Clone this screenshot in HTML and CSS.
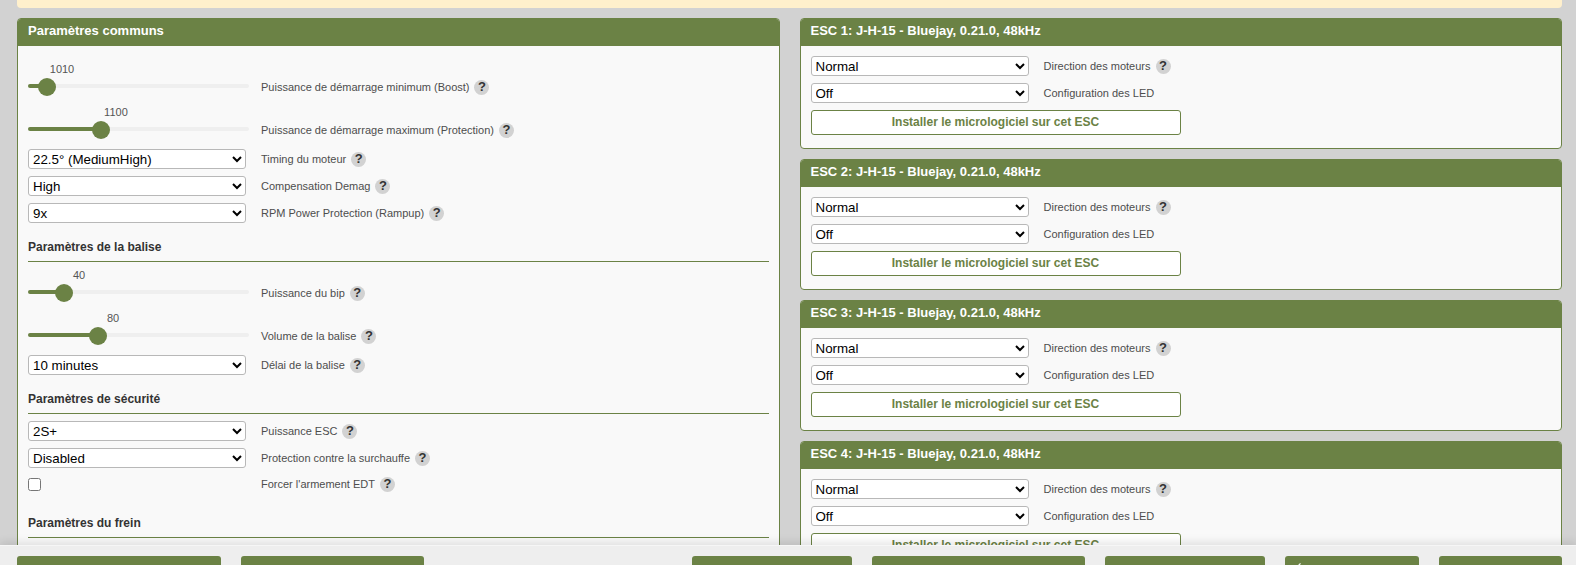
FILE: index.html
```html
<!DOCTYPE html>
<html lang="fr">
<head>
<meta charset="utf-8">
<title>ESC</title>
<link rel="stylesheet" href="styles.css">
</head>
<body>
<div class="page">
  <div class="notice"></div>
  <div class="columns">
    <section class="panel common">
      <h2 class="panel-title">Paramètres communs</h2>
      <div class="panel-body">
        <div class="row slider-row lead"><div class="control"><div class="slider" style="--pct:8.6%"><output class="bubble">1010</output><span class="thumb"></span></div></div><span class="label">Puissance de démarrage minimum (Boost)</span><span class="help">?</span></div>
        <div class="row slider-row"><div class="control"><div class="slider" style="--pct:33%"><output class="bubble">1100</output><span class="thumb"></span></div></div><span class="label">Puissance de démarrage maximum (Protection)</span><span class="help">?</span></div>
        <div class="row"><div class="control"><select><option>22.5° (MediumHigh)</option></select></div><span class="label">Timing du moteur</span><span class="help">?</span></div>
        <div class="row"><div class="control"><select><option>High</option></select></div><span class="label">Compensation Demag</span><span class="help">?</span></div>
        <div class="row"><div class="control"><select><option>9x</option></select></div><span class="label">RPM Power Protection (Rampup)</span><span class="help">?</span></div>
        <h3 class="section-title">Paramètres de la balise</h3>
        <div class="row slider-row"><div class="control"><div class="slider" style="--pct:16.3%"><output class="bubble">40</output><span class="thumb"></span></div></div><span class="label">Puissance du bip</span><span class="help">?</span></div>
        <div class="row slider-row"><div class="control"><div class="slider" style="--pct:31.7%"><output class="bubble">80</output><span class="thumb"></span></div></div><span class="label">Volume de la balise</span><span class="help">?</span></div>
        <div class="row"><div class="control"><select><option>10 minutes</option></select></div><span class="label">Délai de la balise</span><span class="help">?</span></div>
        <h3 class="section-title">Paramètres de sécurité</h3>
        <div class="row"><div class="control"><select><option>2S+</option></select></div><span class="label">Puissance ESC</span><span class="help">?</span></div>
        <div class="row"><div class="control"><select><option>Disabled</option></select></div><span class="label">Protection contre la surchauffe</span><span class="help">?</span></div>
        <div class="row check-row"><div class="control"><input type="checkbox"></div><span class="label">Forcer l'armement EDT</span><span class="help">?</span></div>
        <h3 class="section-title brake">Paramètres du frein</h3>
      </div>
    </section>
    <div class="esc-list">
      <section class="panel esc">
        <h2 class="panel-title">ESC 1: J-H-15 - Bluejay, 0.21.0, 48kHz</h2>
        <div class="panel-body">
          <div class="row"><div class="control"><select><option>Normal</option></select></div><span class="label">Direction des moteurs</span><span class="help">?</span></div>
          <div class="row"><div class="control"><select><option>Off</option></select></div><span class="label">Configuration des LED</span></div>
          <button class="flash">Installer le micrologiciel sur cet ESC</button>
        </div>
      </section>
      <section class="panel esc">
        <h2 class="panel-title">ESC 2: J-H-15 - Bluejay, 0.21.0, 48kHz</h2>
        <div class="panel-body">
          <div class="row"><div class="control"><select><option>Normal</option></select></div><span class="label">Direction des moteurs</span><span class="help">?</span></div>
          <div class="row"><div class="control"><select><option>Off</option></select></div><span class="label">Configuration des LED</span></div>
          <button class="flash">Installer le micrologiciel sur cet ESC</button>
        </div>
      </section>
      <section class="panel esc">
        <h2 class="panel-title">ESC 3: J-H-15 - Bluejay, 0.21.0, 48kHz</h2>
        <div class="panel-body">
          <div class="row"><div class="control"><select><option>Normal</option></select></div><span class="label">Direction des moteurs</span><span class="help">?</span></div>
          <div class="row"><div class="control"><select><option>Off</option></select></div><span class="label">Configuration des LED</span></div>
          <button class="flash">Installer le micrologiciel sur cet ESC</button>
        </div>
      </section>
      <section class="panel esc">
        <h2 class="panel-title">ESC 4: J-H-15 - Bluejay, 0.21.0, 48kHz</h2>
        <div class="panel-body">
          <div class="row"><div class="control"><select><option>Normal</option></select></div><span class="label">Direction des moteurs</span><span class="help">?</span></div>
          <div class="row"><div class="control"><select><option>Off</option></select></div><span class="label">Configuration des LED</span></div>
          <button class="flash">Installer le micrologiciel sur cet ESC</button>
        </div>
      </section>
    </div>
  </div>
</div>
<footer class="toolbar">
  <div class="tool-group"><span class="tool w204"></span><span class="tool w183"></span></div>
  <div class="tool-group"><span class="tool w160"></span><span class="tool w213"></span><span class="tool w160"></span><span class="tool w134">Écrire</span><span class="tool w123"></span></div>
</footer>
</body>
</html>
```
FILE: styles.css
```css
* { box-sizing: border-box; }
html, body { margin: 0; height: 100%; overflow: hidden; }
body { background: #d2d2d2; font-family: "Liberation Sans", Arial, sans-serif; color: #4d4d4d; font-size: 11px; }
.page { padding: 0 14px 0 17px; }
.notice { height: 8px; background: #fff0cc; border-radius: 0 0 4px 4px; margin-bottom: 10px; }
.columns { display: grid; grid-template-columns: 1fr 1fr; gap: 20px; align-items: start; }
.esc-list { display: flex; flex-direction: column; gap: 10px; }
.panel { background: #f9f9f9; border: 1px solid #6b8245; border-radius: 4px; overflow: hidden; }
.panel-title { margin: 0; height: 27px; background: #6b8245; color: #fff; font-size: 13px; font-weight: bold; line-height: 24px; padding-left: 10px; }
.panel-body { padding: 10px 10px 13px; }
.common .panel-body { padding-bottom: 60px; }
.row { display: flex; align-items: center; height: 20px; margin-bottom: 7px; }
.control { width: 218px; margin-right: 15px; flex: none; display: flex; align-items: center; }
.label { font-size: 11px; }
.help { width: 15px; height: 15px; margin-left: 5px; border-radius: 50%; background: #d2d2d2; color: #333; font-weight: bold; font-size: 13px; line-height: 14px; text-align: center; flex: none; }
select { width: 218px; height: 20px; font: 13.33px "Liberation Sans", Arial, sans-serif; color: #000; background: #fff; border: 1px solid #b8b8b8; border-radius: 3px; padding: 0; }
.lead { margin-top: 7px; }
.slider-row { height: 36px; padding-top: 12px; }
.slider-row .control { height: 18px; }
.slider { position: relative; flex: none; width: 221px; height: 4px; margin-bottom: 2px; background: #efefef; border-radius: 2px; }
.slider::before { content: ""; position: absolute; left: 0; top: 0; bottom: 0; width: var(--pct); background: #6b8245; border-radius: 2px; }
.thumb { position: absolute; left: var(--pct); top: -6px; width: 18px; height: 18px; margin-left: -9px; background: #6b8245; border-radius: 50%; }
.bubble { position: absolute; left: calc(var(--pct) + 15px); bottom: 12px; transform: translateX(-50%); font-size: 11px; line-height: 13px; color: #555; }
.section-title { margin: 0 0 7px; height: 32px; border-bottom: 1px solid #6b8245; font-size: 12px; font-weight: bold; line-height: 35px; color: #333; }
.check-row { height: 18px; }
.check-row input { margin: 0; width: 13px; height: 13px; }
.brake { margin-top: 13px; margin-bottom: 0; }
.flash { display: block; width: 370px; height: 25px; padding: 0 0 2px; background: #fff; border: 1px solid #6b8245; border-radius: 3px; color: #6b8245; font: bold 12px "Liberation Sans", Arial, sans-serif; }
.toolbar { position: fixed; left: 0; right: 0; bottom: 0; height: 20px; background: #eee; border-top: 1px solid #f6f6f6; padding: 10px 14px 0 17px; display: flex; justify-content: space-between; box-shadow: 0 -3px 8px rgba(0,0,0,.1); }
.tool-group { display: flex; gap: 20px; }
.tool { background: #6b8245; border-radius: 3px 3px 0 0; height: 30px; display: block; padding: 8px 0 0 10px; color: #fff; font-size: 12px; font-weight: bold; line-height: 14px; flex: none; }
.w204 { width: 204px; } .w183 { width: 183px; } .w160 { width: 160px; } .w213 { width: 213px; } .w134 { width: 134px; } .w123 { width: 123px; }
```
